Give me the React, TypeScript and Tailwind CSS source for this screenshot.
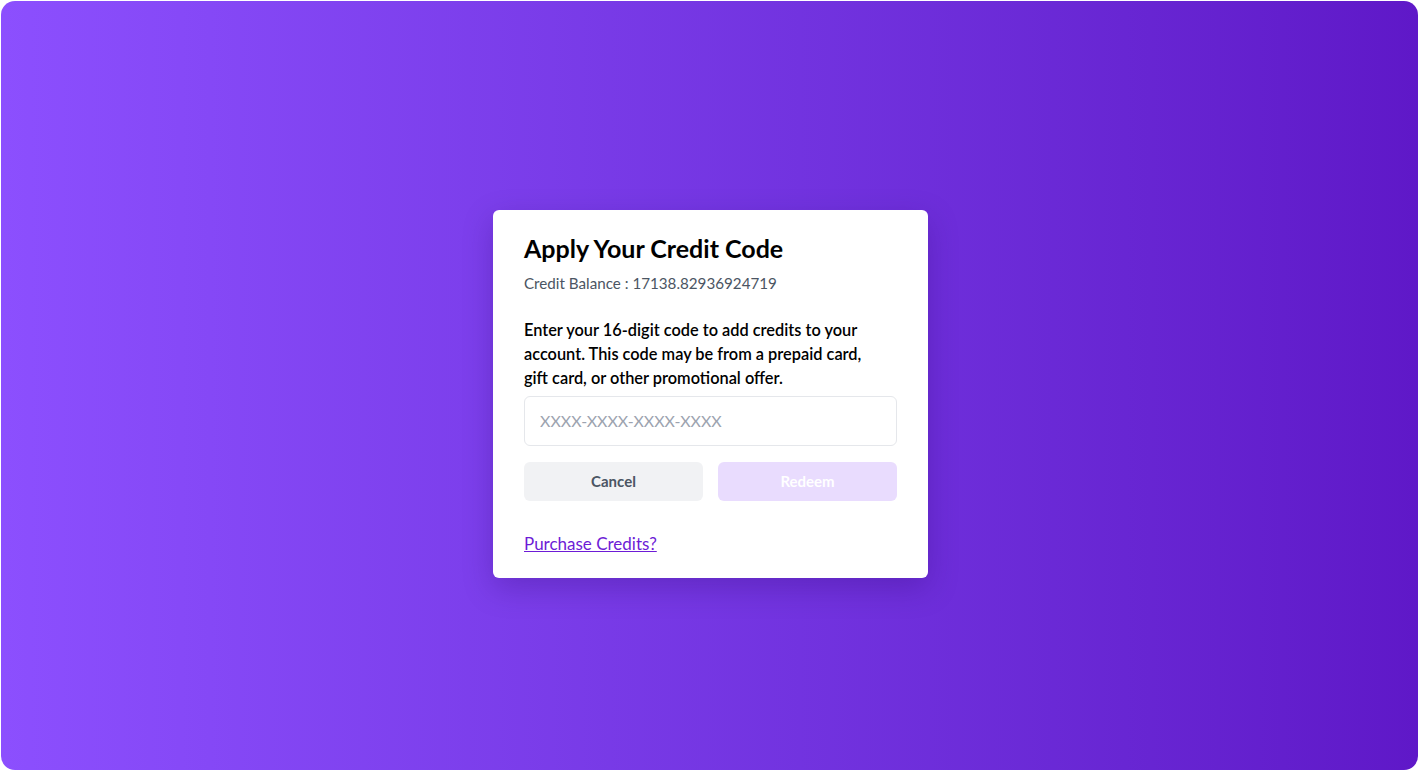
import React, { useState } from 'react';

export default function App() {
  const [code, setCode] = useState('');

  return (
    <div className="h-[771px] w-full bg-white p-px" style={{ fontFamily: 'Lato, "Noto Sans", sans-serif' }}>
      <div className="flex h-full w-full items-center justify-center rounded-[14px] bg-gradient-to-r from-[#8c4ffe] to-[#5f18c8] pt-[16px] pl-[2px]">
        <div className="w-[435px] rounded-md bg-white px-[31px] pt-[23px] pb-[22px] shadow-[0_10px_30px_rgba(40,0,100,0.25)]">
          <h1 className="text-[25px] font-bold leading-[30px] text-black">Apply Your Credit Code</h1>
          <p className="mt-[10px] text-[15.2px] leading-[20px] text-[#4b5563]">Credit Balance : 17138.82936924719</p>

          <p className="mt-[25px] pr-[16px] text-[16.35px] font-semibold leading-[24px] text-black">
            Enter your 16-digit code to add credits to your account. This code may be from a prepaid card, gift card, or other promotional offer.
          </p>

          <input
            value={code}
            onChange={(e) => setCode(e.target.value)}
            placeholder="XXXX-XXXX-XXXX-XXXX"
            className="mt-[6px] h-[50px] w-full rounded-md border border-[#e5e7eb] px-[15px] text-[16px] text-black placeholder:text-[#9ca3af] outline-none"
          />

          <div className="mt-[16px] grid grid-cols-2 gap-[15px]">
            <button className="h-[39px] rounded-md bg-[#f1f2f4] text-[15px] font-bold text-[#4b5563]">Cancel</button>
            <button className="h-[39px] rounded-md bg-[#e9dcfe] text-[15px] font-bold text-white" disabled>
              Redeem
            </button>
          </div>

          <a href="#" className="mt-[33px] inline-block text-[17px] leading-[20px] text-[#6d1bd6] underline">
            Purchase Credits?
          </a>
        </div>
      </div>
    </div>
  );
}
